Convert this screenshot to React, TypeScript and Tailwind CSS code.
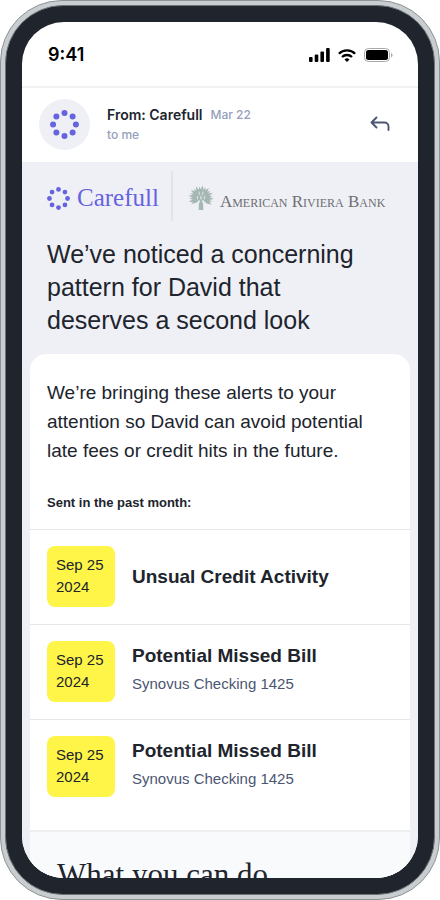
import React from 'react';

interface Alert {
  id: number;
  day: string;
  year: string;
  title: string;
  account?: string;
}

const alerts: Alert[] = [
  { id: 1, day: 'Sep 25', year: '2024', title: 'Unsual Credit Activity' },
  { id: 2, day: 'Sep 25', year: '2024', title: 'Potential Missed Bill', account: 'Synovus Checking 1425' },
  { id: 3, day: 'Sep 25', year: '2024', title: 'Potential Missed Bill', account: 'Synovus Checking 1425' },
];

// Angles of the palm fronds, 0 points straight up
const fronds = [-122, -108, -94, -80, -66, -52, -38, -24, -8, 8, 24, 38, 52, 66, 80, 94, 108, 122];

// Eight dots in a ring
const CarefullMark: React.FC<{ className: string }> = ({ className }) => (
  <svg viewBox="0 0 30 30" className={className} fill="#6563df" aria-hidden="true">
    <circle cx="15" cy="3.2" r="3.1" />
    <circle cx="23.4" cy="6.6" r="3.1" />
    <circle cx="26.8" cy="15" r="3.1" />
    <circle cx="23.4" cy="23.4" r="3.1" />
    <circle cx="15" cy="26.8" r="3.1" />
    <circle cx="6.6" cy="23.4" r="3.1" />
    <circle cx="3.2" cy="15" r="3.1" />
    <circle cx="6.6" cy="6.6" r="3.1" />
  </svg>
);

const PalmMark: React.FC = () => (
  <svg viewBox="0 0 26 26" className="size-[26px] shrink-0" fill="#a5b7b3" aria-hidden="true">
    {fronds.map((angle, i) => (
      <path
        key={angle}
        d={i % 2 ? 'M13 13L11.300 5.500 13 .2l1.700 5.300z' : 'M13 13l-1.700-6L13 1.200l1.700 5.800z'}
        transform={`rotate(${angle} 13 13)`}
      />
    ))}
    <path d="M11 14h4l.3 11h-4.600z" />
    <path d="M11.200 7v2.500M14.800 7v2.500M9.500 11.500v2.500M13 11v3M16.500 11.500v2.500M11.300 15.500v2M14.700 15.500v2" stroke="#eff0f5" strokeWidth=".8" strokeLinecap="round" />
  </svg>
);

const StatusBar: React.FC = () => (
  <div className="flex h-[66px] shrink-0 items-center justify-between border-b-2 border-[#f0f1f3] pt-0.5 pr-[25px] pl-[26px]">
    <span className="font-['Inter',sans-serif] text-lg font-semibold text-black">9:41</span>
    <div className="flex items-center gap-2">
      <svg width="21" height="14" viewBox="0 0 21 14" aria-hidden="true">
        <rect x="0" y="9" width="3.600" height="5" rx="1" />
        <rect x="5.700" y="6.500" width="3.600" height="7.500" rx="1" />
        <rect x="11.400" y="3.500" width="3.600" height="10.500" rx="1" />
        <rect x="17.100" y="0" width="3.600" height="14" rx="1" />
      </svg>
      <svg width="18" height="13" viewBox="0 0 18 13" fill="none" stroke="#000" strokeWidth="2.300" aria-hidden="true">
        <path d="M.9 4.700a11.500 11.500 0 0 1 16.200 0" />
        <path d="M4 8a7.200 7.200 0 0 1 10 0" />
        <path d="M9 13L6.500 10.500a3.600 3.600 0 0 1 5 0z" fill="#000" stroke="none" />
      </svg>
      <svg width="29" height="14" viewBox="0 0 29 14" aria-hidden="true">
        <rect x=".5" y=".5" width="25" height="13" rx="4" fill="none" stroke="#a9a9a9" />
        <rect x="2" y="2" width="22" height="10" rx="2.500" />
        <path d="M27 5v4.500c1-.4 1.500-1.300 1.500-2.200S28 5.400 27 5z" fill="#a9a9a9" />
      </svg>
    </div>
  </div>
);

const MailHeader: React.FC = () => (
  <header className="flex h-[74px] shrink-0 items-center px-[17px] pb-0.5 font-['Inter',sans-serif]">
    <div className="flex size-[51px] items-center justify-center rounded-full bg-[#eff0f5]">
      <CarefullMark className="size-[29px]" />
    </div>
    <div className="ml-[17px] flex-1 pt-0.5">
      <div className="flex items-center gap-2">
        <span className="text-sm leading-5 font-semibold text-[#20242d]">From: Carefull</span>
        <span className="text-xs leading-5 font-medium text-[#94a0ba]">Mar 22</span>
      </div>
      <p className="text-xs leading-5 font-medium text-[#94a0ba]">to me</p>
    </div>
    <button type="button" aria-label="Reply" className="mr-[11px]">
      <svg width="20" height="16" viewBox="0 0 20 16" fill="none" stroke="#4b5672" strokeWidth="1.900" strokeLinecap="round" strokeLinejoin="round">
        <path d="M6.500 1.500L1.500 6.500l5 5M1.500 6.500H14.500a4 4 0 0 1 4 4V14" />
      </svg>
    </button>
  </header>
);

const AlertRow: React.FC<{ alert: Alert }> = ({ alert }) => (
  <li className="flex items-center gap-[17px] border-t border-[#e6e7ea] px-[17px] pt-4 pb-[17px]">
    <div className="w-[68px] rounded-lg bg-[#fff548] pt-2 pb-[9px] pl-[9px] text-[15px] leading-[22px]">
      <div>{alert.day}</div>
      <div>{alert.year}</div>
    </div>
    <div>
      <h2 className="text-[19px] leading-7 font-bold">{alert.title}</h2>
      {alert.account && <p className="pb-[3px] text-[15px] leading-7 text-[#4b5672]">{alert.account}</p>}
    </div>
  </li>
);

const App: React.FC = () => {
  return (
    <div className="h-screen overflow-hidden rounded-[62px] border border-[#8d9294] bg-[#c8cdcf] p-1 font-['Liberation_Sans',sans-serif] text-[#20242d]">
      <div className="h-full rounded-[58px] border border-[#6d7478] bg-[#20242d] p-4">
        <div className="flex h-full flex-col overflow-hidden rounded-[42px] bg-white">
          <StatusBar />
          <MailHeader />

          <main className="flex-1 overflow-hidden bg-[#eff0f5] px-2">
            <div className="mt-[9px] flex h-[50px] pl-[17px]">
              <div className="flex items-center gap-[7px] pt-1">
                <CarefullMark className="size-[23px] shrink-0" />
                <span className="font-['Liberation_Serif',serif] text-[25px] leading-8 text-[#6563df]">Carefull</span>
              </div>
              <div className="mr-[15px] ml-3 w-0.5 shrink-0 bg-[#e1e3e9]" />
              <div className="flex items-center gap-[6px] pt-1">
                <PalmMark />
                <span className="pt-2 font-['Liberation_Serif',serif] text-[17px] leading-8 whitespace-nowrap text-[#6d6f73] [font-variant:small-caps]">
                  American Riviera Bank
                </span>
              </div>
            </div>

            <h1 className="mt-[17px] pr-12 pl-[17px] text-[25px] leading-[33px]">
              We’ve noticed a concerning pattern for David that deserves a second look
            </h1>

            <section className="mt-[17px] overflow-hidden rounded-t-2xl bg-white">
              <p className="px-[17px] pt-6 text-[19px] leading-[29px]">
                We’re bringing these alerts to your attention so David can avoid potential late fees or credit hits in the future.
              </p>
              <p className="mt-7 px-[17px] pb-4 text-[13px] leading-5 font-bold">Sent in the past month:</p>
              <ul className="pb-4">
                {alerts.map((alert) => (
                  <AlertRow key={alert.id} alert={alert} />
                ))}
              </ul>
              <div className="border-t-2 border-[#edeff1] bg-[#f9fafc] px-[27px] pt-[25px] pb-12">
                <h2 className="font-['Liberation_Serif',serif] text-[31px] leading-9">What you can do</h2>
              </div>
            </section>
          </main>
        </div>
      </div>
    </div>
  );
};

export default App;
